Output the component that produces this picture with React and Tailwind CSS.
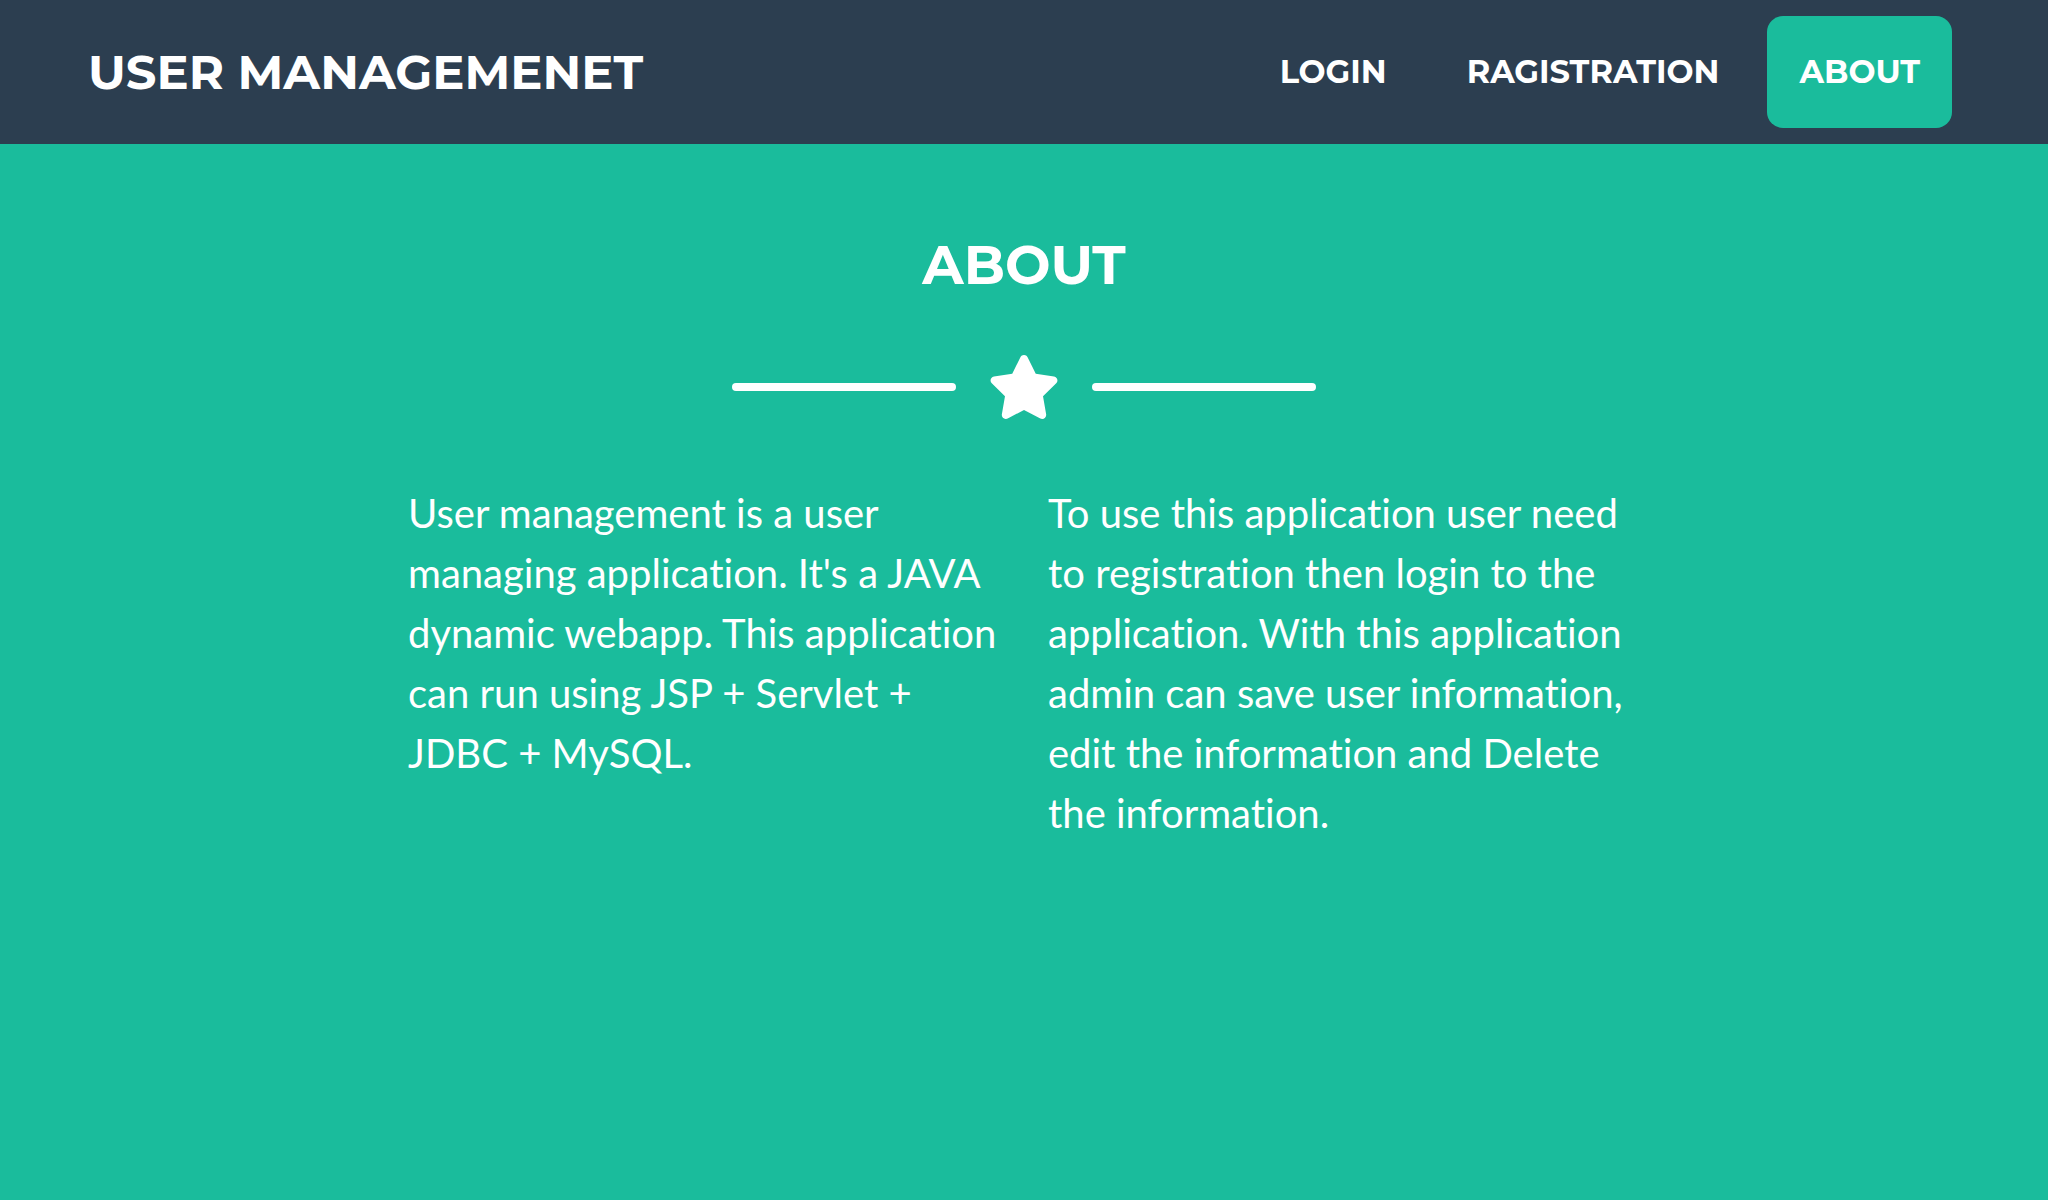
import React from "react";
import { FaStar } from "react-icons/fa";

const link = "rounded-2xl p-8 text-[32px] leading-12 font-bold text-white";

export default function App() {
  return (
    <div className="min-h-screen bg-[#1abc9c] font-['Lato',sans-serif] text-white">
      <nav className="flex items-center justify-between bg-[#2c3e50] px-16 py-4 font-['Montserrat','Inter',sans-serif] font-bold">
        <a href="#" className="pl-6 text-[48px] leading-18">USER MANAGEMENET</a>
        <div className="flex gap-4 pr-8">
          <a href="#login" className={link}>LOGIN</a>
          <a href="#registration" className={link}>RAGISTRATION</a>
          <a href="#about" className={`${link} bg-[#1abc9c]`}>ABOUT</a>
        </div>
      </nav>
      <main className="mx-auto max-w-[1280px] pt-22">
        <h1 className="text-center font-['Montserrat','Inter',sans-serif] text-[54px] leading-[67px] font-bold">ABOUT</h1>
        <div className="mt-14 flex items-center justify-center gap-8">
          <span className="h-2 w-56 rounded-full bg-white" />
          <FaStar className="h-16 w-18" />
          <span className="h-2 w-56 rounded-full bg-white" />
        </div>
        <div className="mt-16 grid grid-cols-2 text-[40px] leading-[60px] [font-variant-ligatures:none]">
          <p className="px-6">User management is a user managing application. It's a JAVA dynamic webapp. This application can run using JSP + Servlet + JDBC + MySQL.</p>
          <p className="px-6">To use this application user need to registration then login to the application. With this application admin can save user information, edit the information and Delete the information.</p>
        </div>
      </main>
    </div>
  );
}
